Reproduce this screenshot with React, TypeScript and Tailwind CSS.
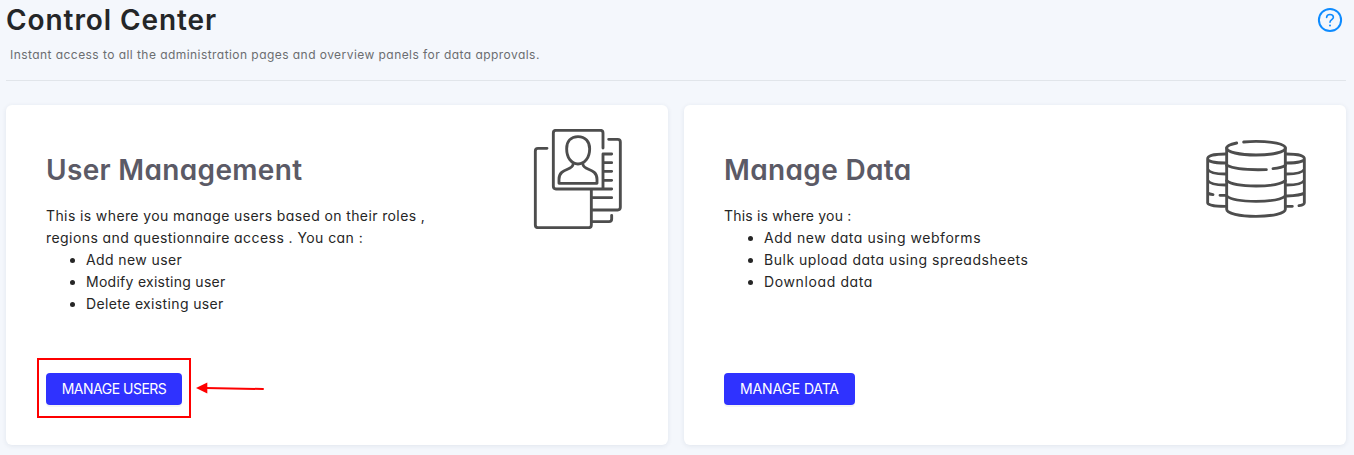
import type { ReactNode } from "react";

function UsersIcon() {
  return (
    <svg className="h-[100px] w-[100px] shrink-0" viewBox="24 42 300 300" fill="none" stroke="#4d4d4d" strokeWidth="8.6" strokeLinecap="round" strokeLinejoin="round">
      <path d="M249 99V54q0-8-8-8H108q-8 0-8 8v160q0 8 8 8H275" />
      <path d="M81 100H54q-8 0-8 8V330q0 8 8 8H206q8 0 8-8V224" />
      <path d="M266 73H293q8 0 8 8V277q0 8-8 8H216" />
      <path d="M249 220V117H275M251 143H275M251 169H275M251 196H275M217 248H275M216 320H267q8 0 8-8V301" />
      <path d="M174 65C152 65 140 80 140 101C140 128 154 147 174 147C194 147 209 128 209 101C209 80 196 65 174 65Z" />
      <path d="M159 149C157 167 117 159 117 193V205H231V193C231 159 191 167 189 149" />
    </svg>
  );
}

function DatabaseIcon() {
  return (
    <svg className="h-[100px] w-[100px] shrink-0" viewBox="48 12 300 300" fill="none" stroke="#4d4d4d" strokeWidth="8.6" strokeLinecap="round" strokeLinejoin="round">
      <path d="M140 54C120 58 110 63 110 69C110 81 148 90 198 90C248 90 286 81 286 69C286 57 245 49 198 49C184 49 171 50 161 51" />
      <path d="M110 69V253C110 265 148 274 198 274C248 274 286 265 286 253V69" />
      <path d="M110 121C130 131 166 136 229 134M249 131C267 129 279 126 286 121" />
      <path d="M110 167C122 177 154 183 198 183C242 183 274 177 286 167M110 213C122 223 154 229 198 229C242 229 274 223 286 213" />
      <path d="M106 87C75 87 53 92 53 101C53 109 75 114 106 114M53 101V233C53 240 74 244 106 244M53 133C58 142 78 147 106 147M53 166C58 175 78 180 106 180M53 204C57 207 62 208 69 209M90 211H106" />
      <path d="M290 87C321 87 343 92 343 101C343 109 321 114 290 114M343 101V233C343 237 337 240 327 242M343 133C338 142 318 147 290 147M343 166C338 175 318 180 290 180M343 204C336 209 318 212 290 213M290 244H307" />
    </svg>
  );
}

function HelpIcon() {
  return (
    <svg className="mt-[7px] h-[26px] w-[26px]" viewBox="0 0 26 26" fill="none" stroke="#0d8bff" strokeLinecap="round">
      <circle cx="13" cy="13" r="11.1" strokeWidth="2" />
      <path d="M9.6 10.5C9.6 8.6 11 7.5 13 7.5C15 7.5 16.4 8.6 16.4 10.3C16.4 12.5 13 12.8 13 15.2" strokeWidth="1.6" />
      <circle cx="13" cy="18.4" r="1" fill="#0d8bff" stroke="none" />
    </svg>
  );
}

function Line({ children, spacing }: { children: ReactNode; spacing: string }) {
  return <span className={`block whitespace-nowrap ${spacing}`}>{children}</span>;
}

function Card({ title, titleClass, icon, children, action }: { title: string; titleClass: string; icon: ReactNode; children: ReactNode; action: ReactNode }) {
  return (
    <section className="flex h-[340px] flex-1 items-start justify-between rounded-md bg-white px-10 pt-6 pb-10 shadow-[0_1px_5px_rgba(30,50,90,0.09)]">
      <div className="flex h-full flex-col items-start pt-5">
        <h2 className={`h-9 whitespace-nowrap text-[28px] leading-[42px] font-semibold text-[#5b5a66] ${titleClass}`}>{title}</h2>
        <div className="mt-5 text-sm leading-[22px] text-[#262626]">{children}</div>
        <div className="mt-auto">{action}</div>
      </div>
      {icon}
    </section>
  );
}

function Button({ children, className }: { children: ReactNode; className: string }) {
  return (
    <button className={`flex h-8 items-center justify-center rounded bg-[#2f32ff] text-sm whitespace-nowrap text-white shadow-[0_2px_0_rgba(0,0,0,0.045)] ${className}`}>
      {children}
    </button>
  );
}

export default function App() {
  return (
    <main className="h-[455px] w-full overflow-hidden bg-[#f4f7fc] pr-2 pl-1.5 font-[Inter,sans-serif] [font-feature-settings:'cv11']">
      <header className="flex h-[81px] items-start justify-between border-b border-[#e1e5ea] pr-[3px]">
        <div>
          <h1 className="h-10 text-[28px] leading-[41px] font-semibold tracking-[0.92px] whitespace-nowrap text-[#242628]">Control Center</h1>
          <p className="ml-1 pt-1 text-[12px] leading-[22px] tracking-[0.445px] whitespace-nowrap text-[#6b6d70]">
            Instant access to all the administration pages and overview panels for data approvals.
          </p>
        </div>
        <HelpIcon />
      </header>
      <div className="mt-6 flex gap-4">
        <Card
          title="User Management"
          titleClass="tracking-[0.33px]"
          icon={<UsersIcon />}
          action={
            <div className="relative">
              <Button className="w-[136px] tracking-[-0.5px]">MANAGE USERS</Button>
              <div className="pointer-events-none absolute -top-[15px] -left-[9px] h-[60px] w-[154px] border-2 border-[#fe0000]" />
              <svg className="pointer-events-none absolute top-[9px] left-[150px] h-3 w-[70px]" viewBox="0 0 70 12">
                <path d="M9 6L67 7" stroke="#fe0000" strokeWidth="2" strokeLinecap="round" />
                <path d="M0 6L11.3.5V11.5Z" fill="#fe0000" />
              </svg>
            </div>
          }
        >
          <Line spacing="tracking-[0.39px]">This is where you manage users based on their roles ,</Line>
          <Line spacing="tracking-[0.43px]">regions and questionnaire access . You can :</Line>
          <ul className="list-disc pl-10">
            <li><Line spacing="tracking-[0.4px]">Add new user</Line></li>
            <li><Line spacing="tracking-[0.27px]">Modify existing user</Line></li>
            <li><Line spacing="tracking-[0.36px]">Delete existing user</Line></li>
          </ul>
        </Card>
        <Card title="Manage Data" titleClass="tracking-[0.35px]" icon={<DatabaseIcon />} action={<Button className="w-[131px] tracking-[-0.15px]">MANAGE DATA</Button>}>
          <Line spacing="tracking-[0.18px]">This is where you :</Line>
          <ul className="list-disc pl-10">
            <li><Line spacing="tracking-[0.54px]">Add new data using webforms</Line></li>
            <li><Line spacing="tracking-[0.52px]">Bulk upload data using spreadsheets</Line></li>
            <li><Line spacing="tracking-[0.62px]">Download data</Line></li>
          </ul>
        </Card>
      </div>
    </main>
  );
}
